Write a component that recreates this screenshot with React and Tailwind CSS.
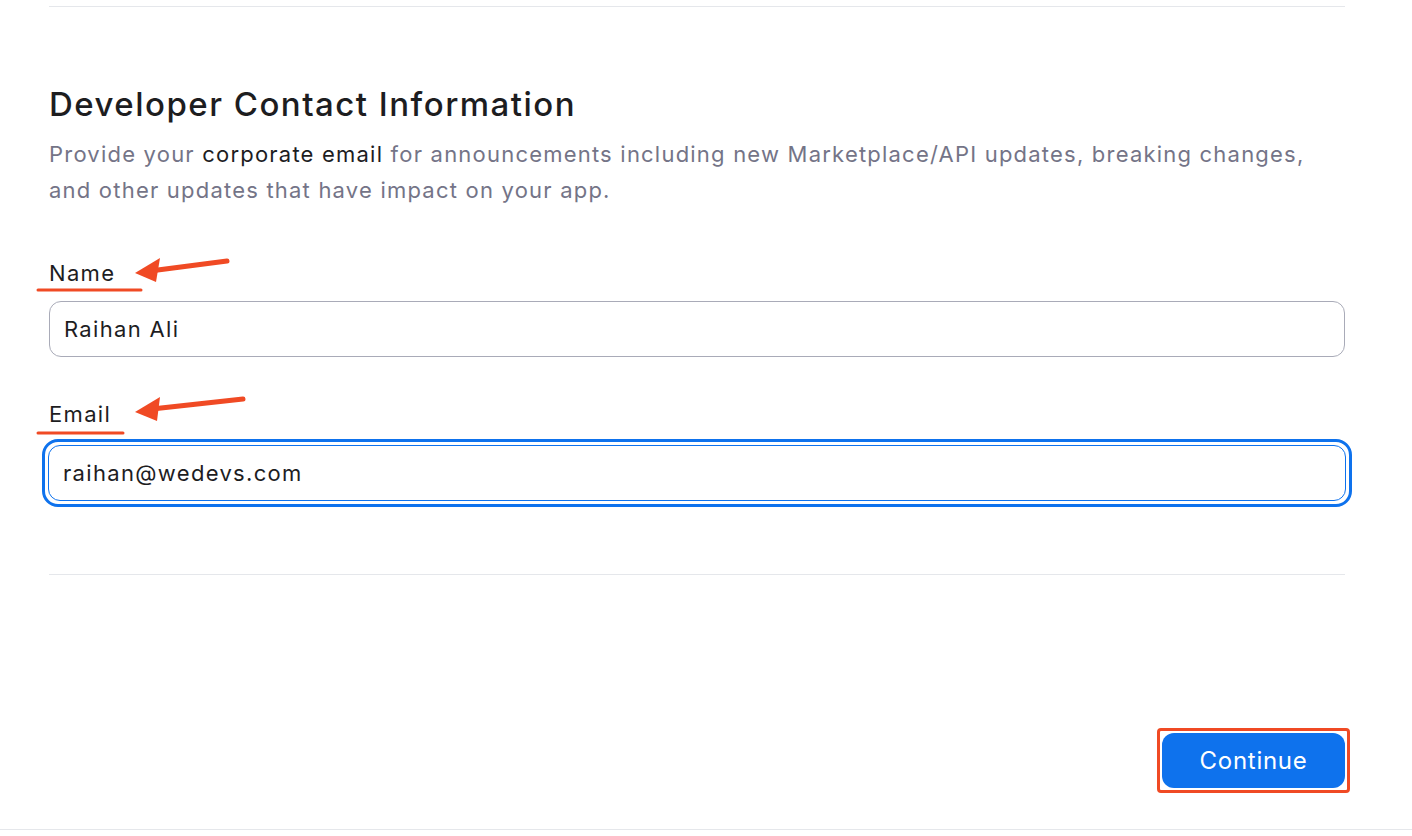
export default function App() {
  return (
    <div className="w-[1412px] h-[836px] bg-white relative overflow-hidden" style={{ fontFamily: "Inter, 'Liberation Sans', sans-serif" }}>
      <div className="px-[49px] pr-[67px]">
        <div className="h-[7px] border-b border-[#e5e7eb]" />
        <h1 className="mt-[77px] text-[33px] leading-[40px] text-[#1d1d1f] font-medium tracking-[0.045em]">Developer Contact Information</h1>
        <p className="mt-[12px] text-[22px] leading-[36px] text-[#747487] tracking-[0.055em]">
          Provide your <span className="text-[#1d1d1f]">corporate email</span> for announcements including new Marketplace/API updates, breaking changes, and other updates that have impact on your app.
        </p>
        <div className="mt-[50px] text-[22px] leading-[30px] text-[#1d1d1f] tracking-[0.06em]">Name</div>
        <div className="mt-[13px] h-[56px] rounded-[12px] border border-[#a9abb8] flex items-center px-[14px] text-[22px] text-[#1d1d1f] tracking-[0.06em]">Raihan Ali</div>
        <div className="mt-[42px] text-[22px] leading-[30px] text-[#1d1d1f] tracking-[0.06em]">Email</div>
        <div className="mt-[10px] -mx-[7px] p-[3px] rounded-[16px] border-[3px] border-[#0e72ed]">
          <div className="h-[56px] rounded-[12px] border border-[#0e72ed] flex items-center px-[14px] text-[22px] text-[#1d1d1f] tracking-[0.06em]">raihan@wedevs.com</div>
        </div>
        <div className="mt-[67px] border-t border-[#e5e7eb]" />
        <div className="mt-[153px] flex justify-end">
          <div className="p-[2px] border-[3px] border-[#f04a24] rounded-[4px] -mr-[5px]">
            <button className="w-[183px] h-[55px] rounded-[12px] bg-[#0e72ed] text-white text-[24px] tracking-[0.03em]">Continue</button>
          </div>
        </div>
      </div>
      <div className="absolute left-0 right-0 top-[829px] border-t border-[#e5e7eb]" />
      <svg className="absolute left-0 top-0" width="1412" height="836" viewBox="0 0 1412 836">
        <path d="M38 290 L141 290" stroke="#f04a24" strokeWidth="3" strokeLinecap="round" />
        <path d="M38 433 L123 433" stroke="#f04a24" strokeWidth="3" strokeLinecap="round" />
        <path d="M227 261 L150 271" stroke="#f04a24" strokeWidth="5" strokeLinecap="round" />
        <path d="M135 273 L160 258 L156 282 Z" fill="#f04a24" />
        <path d="M243 399 L152 409" stroke="#f04a24" strokeWidth="5" strokeLinecap="round" />
        <path d="M135 412 L160 397 L157 421 Z" fill="#f04a24" />
      </svg>
    </div>
  );
}
